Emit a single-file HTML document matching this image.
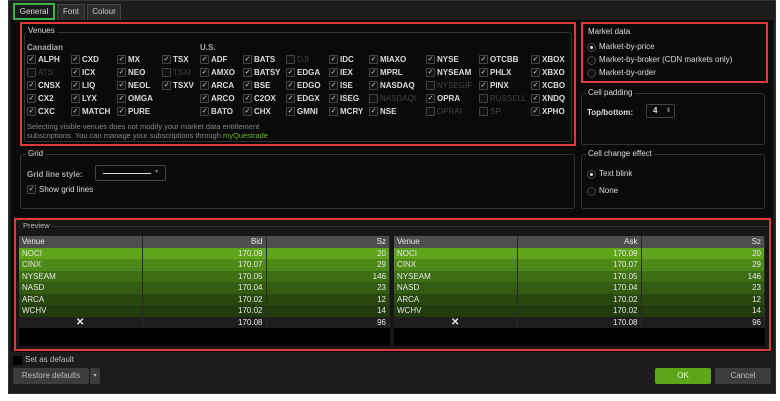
<!DOCTYPE html>
<html><head><style>
*{box-sizing:border-box;margin:0;padding:0}
body{width:780px;height:401px;background:#fff;font-family:"Liberation Sans",sans-serif;font-size:8px;color:#ddd;position:relative;overflow:hidden}
.a{position:absolute}
.win{left:8px;top:0;width:768px;height:394px;background:#1c1c1c;border:1px solid #333}
.panel{left:11px;top:20px;width:762px;height:332px;background:#0a0a0a}
.grp{border:1px solid #333;border-radius:3px}
.red{border:2px solid #e03a3a}
.lg{font-size:8px;color:#ddd;background:#0a0a0a;padding:0 2px}
.cb{position:absolute;width:9px;height:9px;border:1px solid #444;background:#111;border-radius:1px;font-size:7px;line-height:7px;text-align:center;color:#ddd}
.v{position:absolute;font-size:8px;font-weight:bold;color:#ddd;white-space:nowrap}
.v.d{color:#444;font-weight:normal}
.rad{position:absolute;width:9px;height:9px;border-radius:50%;border:1px solid #444;background:#111}
.rad.on::after{content:"";position:absolute;left:2px;top:2px;width:3px;height:3px;border-radius:50%;background:#ddd}
table{border-collapse:collapse;position:absolute;font-size:8px}
td{height:11.5px;padding:0 3px;border-right:1px solid #2a2a2a;color:#e8e8e8;line-height:11px}
td.r{text-align:right}
.tab{position:absolute;top:4px;height:16px;background:#2c2c2c;border:1px solid #444;border-bottom:none;font-size:8px;line-height:14px;text-align:center;color:#ccc}
.btn{position:absolute;height:16px;border-radius:2px;font-size:8px;line-height:16px;text-align:center}
</style></head><body>
<div class="a win"></div>
<div class="tab" style="left:57px;width:28px">Font</div>
<div class="tab" style="left:87px;width:34px">Colour</div>
<div class="tab" style="left:13px;top:3px;width:42px;height:17px;border:2px solid #3cb04a;background:#1a1a1a;color:#ddd">General</div>
<div class="a panel"></div>

<!-- Venues -->
<div class="a grp" style="left:24px;top:32px;width:548px;height:110px"></div>
<div class="a lg" style="left:26px;top:26px">Venues</div>
<div class="a red" style="left:20px;top:22px;width:556px;height:124px"></div>
<div class="v" style="left:27px;top:43px;color:#aaa">Canadian</div>
<div class="v" style="left:200px;top:43px;color:#aaa">U.S.</div>
<div id="ven"></div>
<div class="a" style="left:27px;top:122px;font-size:7.5px;color:#888;line-height:9px;width:300px">Selecting visible venues does not modify your market data entitlement<br>subscriptions. You can manage your subscriptions through <span style="color:#6cb820">myQuestrade</span></div>

<!-- Market data -->
<div class="a red" style="left:581px;top:22px;width:187px;height:61px"></div>
<div class="a lg" style="left:586px;top:27px">Market data</div>
<div class="rad on" style="left:587px;top:43px"></div><div class="v" style="left:599px;top:42px;font-weight:normal">Market-by-price</div>
<div class="rad" style="left:587px;top:56px"></div><div class="v" style="left:599px;top:55px;font-weight:normal">Market-by-broker (CDN markets only)</div>
<div class="rad" style="left:587px;top:69px"></div><div class="v" style="left:599px;top:68px;font-weight:normal">Market-by-order</div>

<!-- Cell padding -->
<div class="a grp" style="left:581px;top:93px;width:184px;height:52px"></div>
<div class="a lg" style="left:586px;top:88px">Cell padding</div>
<div class="v" style="left:587px;top:108px">Top/bottom:</div>
<div class="a" style="left:646px;top:104px;width:29px;height:14px;border:1px solid #444;border-radius:2px;font-size:8px;padding-left:6px;line-height:12px;font-weight:bold">4<span style="position:absolute;right:3px;top:0;color:#888;font-size:6px">⇕</span></div>

<!-- Grid -->
<div class="a grp" style="left:20px;top:154px;width:555px;height:55px"></div>
<div class="a lg" style="left:26px;top:149px">Grid</div>
<div class="v" style="left:27px;top:170px;color:#aaa">Grid line style:</div>
<div class="a" style="left:95px;top:165px;width:71px;height:16px;border:1px solid #444;border-radius:2px"><div class="a" style="left:7px;top:7px;width:48px;height:1px;background:#ddd"></div><div class="a" style="left:59px;top:2px;font-size:6px;color:#888">▾</div></div>
<div class="cb" style="left:27px;top:185px">✓</div><div class="v" style="left:39px;top:185px;font-weight:normal">Show grid lines</div>

<!-- Cell change effect -->
<div class="a grp" style="left:581px;top:154px;width:184px;height:55px"></div>
<div class="a lg" style="left:586px;top:149px">Cell change effect</div>
<div class="rad on" style="left:587px;top:170px"></div><div class="v" style="left:599px;top:169px;font-weight:normal">Text blink</div>
<div class="rad" style="left:587px;top:187px"></div><div class="v" style="left:599px;top:186px;font-weight:normal">None</div>

<!-- Preview -->
<div class="a" style="left:14px;top:218px;width:757px;height:133px;background:#171717"></div>
<div class="a" style="left:18px;top:226px;width:750px;height:1px;background:#333"></div>
<div class="a" style="left:21px;top:221px;font-size:7.5px;color:#bbb;background:#171717;padding:0 2px">Preview</div>
<div class="a" style="left:19px;top:236px;width:371px;height:110px;background:#000"></div>
<div class="a" style="left:394px;top:236px;width:371px;height:110px;background:#000"></div>
<div id="tbls"></div>
<div class="a red" style="left:14px;top:218px;width:757px;height:133px"></div>

<div class="a" style="left:13px;top:356px;width:9px;height:9px;background:#000"></div>
<div class="v" style="left:25px;top:355px;font-weight:normal;color:#bbb">Set as default</div>
<div class="btn" style="left:13px;top:368px;width:76px;background:#3c3c3c;color:#bbb">Restore defaults</div>
<div class="btn" style="left:90px;top:368px;width:10px;background:#3c3c3c;color:#bbb;font-size:6px">▾</div>
<div class="btn" style="left:655px;top:368px;width:56px;background:#5ea51c;color:#e8f5d8">OK</div>
<div class="btn" style="left:715px;top:368px;width:56px;background:#3c3c3c;color:#bbb">Cancel</div>

<script>
var cols=[27,71,117,162,200,243,286,329,369,426,479,531];
var data=[
["ALPH","ATS*","CNSX","CX2","CXC"],["CXD","ICX","LIQ","LYX","MATCH"],["MX","NEO","NEOL","OMGA","PURE"],["TSX","TSXI*","TSXV","",""],
["ADF","AMXO","ARCA","ARCO","BATO"],["BATS","BATSY","BSE","C2OX","CHX"],["DJI*","EDGA","EDGO","EDGX","GMNI"],["IDC","IEX","ISE","ISEG","MCRY"],
["MIAXO","MPRL","NASDAQ","NASDAQI*","NSE"],["NYSE","NYSEAM","NYSEGIF*","OPRA","OPRAI*"],["OTCBB","PHLX","PINX","RUSSELL*","SP*"],["XBOX","XBXO","XCBO","XNDQ","XPHO"]];
var h="";
data.forEach(function(c,i){c.forEach(function(n,j){if(!n)return;var y=55+j*13;var d=n.indexOf("*")>=0;n=n.replace("*","");
h+='<div class="cb" style="left:'+cols[i]+'px;top:'+y+'px">'+(d?'':'✓')+'</div><div class="v'+(d?' d':'')+'" style="left:'+(cols[i]+11)+'px;top:'+(y)+'px">'+n+'</div>';});});
document.getElementById("ven").innerHTML=h;
var rows=[["NOCI","170.09","20","#5fa41a"],["CINX","170.07","29","#4e8a17"],["NYSEAM","170.05","146","#3e6e14"],["NASD","170.04","23","#335c12"],["ARCA","170.02","12","#29480f"],["WCHV","170.02","14","#223d0d"]];
function tb(x,p){var s='<table style="left:'+x+'px;top:236px;width:371px"><tr style="background:#4e4e4e"><td style="width:123px">Venue</td><td class="r" style="width:124px">'+p+'</td><td class="r">Sz</td></tr>';
rows.forEach(function(r){s+='<tr style="background:'+r[3]+'"><td>'+r[0]+'</td><td class="r">'+r[1]+'</td><td class="r">'+r[2]+'</td></tr>';});
s+='<tr style="background:#1e1e1e"><td style="text-align:center;font-size:10px;font-weight:bold">✕</td><td class="r">170.08</td><td class="r">96</td></tr></table>';return s;}
document.getElementById("tbls").innerHTML=tb(19,"Bid")+tb(394,"Ask");
</script>
</body></html>
